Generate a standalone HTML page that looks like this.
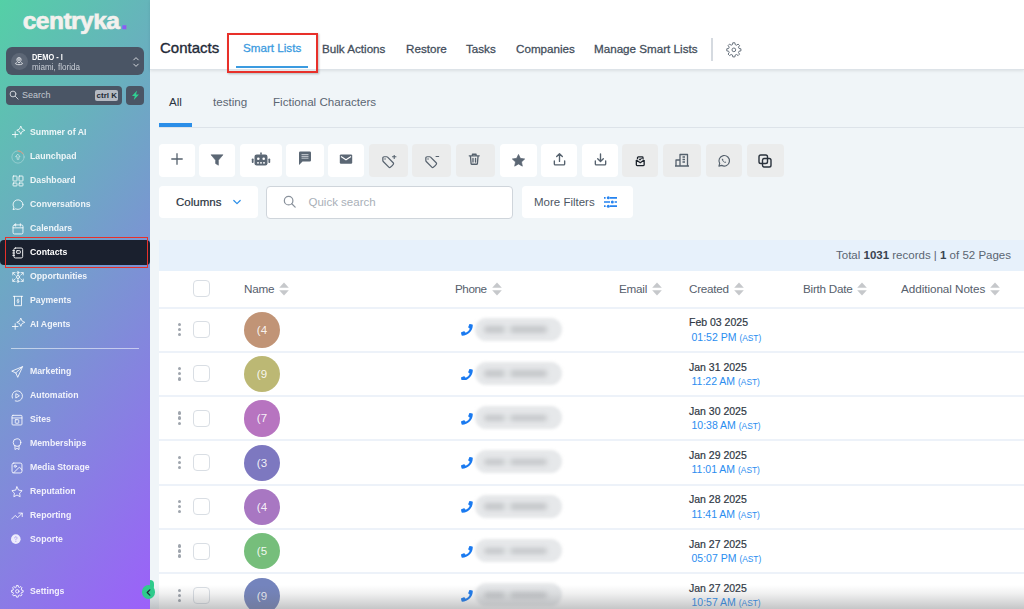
<!DOCTYPE html>
<html lang="en">
<head>
<meta charset="utf-8">
<title>Contacts</title>
<style>
*{box-sizing:border-box;margin:0;padding:0}
html,body{width:1024px;height:609px;overflow:hidden;background:#f0f5f8;font-family:"Liberation Sans",sans-serif;}
body{position:relative}
.abs{position:absolute}
/* ---------- sidebar ---------- */
#side{position:absolute;left:0;top:0;width:150px;height:609px;background:linear-gradient(128deg,#54d0a6 0%,#9c60fa 100%);}
#logo{position:absolute;left:0;top:6.5px;width:150px;text-align:center;color:#f3f1ee;font-weight:bold;font-size:24.5px;letter-spacing:-0.5px;line-height:28px;-webkit-text-stroke:.7px #f3f1ee;clip-path:inset(7px 0 0 0)}
#logo span{color:#8b5cf6;-webkit-text-stroke:.4px #8b5cf6;margin-left:1.5px}
#acct{position:absolute;left:5.600px;top:47.100px;width:138.700px;height:28.400px;border-radius:6px;background:#4a5565}
#acct .av{position:absolute;left:5px;top:5.500px;width:17px;height:17px;border-radius:50%;background:#5d6776}
#acct .t1{position:absolute;left:26px;top:4.900px;font-size:8.3px;font-weight:bold;color:#fff;line-height:10px;transform:scaleX(.89);transform-origin:0 0;white-space:nowrap}
#acct .t2{position:absolute;left:26px;top:14.900px;font-size:8.5px;color:#c9ced6;line-height:10px;transform:scaleX(.95);transform-origin:0 0;white-space:nowrap}
#srch{position:absolute;left:5.600px;top:85.900px;width:116px;height:18.900px;border-radius:4px;background:#4a5565}
#srch .ph{position:absolute;left:16.500px;top:3px;font-size:9px;color:#c3c8d0;line-height:12px}
#srch .kbd{position:absolute;left:89.600px;top:3.800px;width:23.200px;height:11.200px;border-radius:2px;background:#b5bac3;color:#222a35;font-size:8px;font-weight:bold;text-align:center;line-height:11px}
#bolt{position:absolute;left:126px;top:85.900px;width:18.300px;height:18.900px;border-radius:4px;background:#4a5565}
.nav{position:absolute;left:0;width:150px;height:24px}
.nav .lb{position:absolute;left:29.700px;top:6px;font-size:9.200px;font-weight:bold;color:rgba(255,255,255,.88);line-height:12px;white-space:nowrap;transform:scaleX(.95);transform-origin:0 0}
.nav svg{position:absolute;left:10.200px;top:5.900px;width:14px;height:14px;fill:none;stroke:rgba(255,255,255,.9);stroke-width:1.6;stroke-linecap:round;stroke-linejoin:round}
.nav.act{left:0;width:150px;background:#1a202e;border-radius:4px;height:25px}
.nav.act .lb{color:#fff;top:6.5px}
.nav.act svg{top:6px}
#sdiv{position:absolute;left:11px;top:347.600px;width:128px;height:1.200px;background:rgba(255,255,255,.550)}
/* ---------- header ---------- */
#head{position:absolute;left:150px;top:0;width:874px;height:69.500px;background:#fff;border-bottom:1px solid #dde3e8;box-shadow:0 1px 3px rgba(0,0,0,.09)}
#head .ttl{position:absolute;left:10px;top:38px;font-size:15px;color:#1f2a37;line-height:20px;-webkit-text-stroke:.350px #1f2a37}
.tab{position:absolute;top:41.200px;font-size:11.650px;color:#434e5b;line-height:16px;white-space:nowrap;-webkit-text-stroke:.280px currentColor}
/* ---------- body ---------- */
.stab{position:absolute;top:94.200px;font-size:11.600px;color:#5b6673;line-height:16px;white-space:nowrap}
.tb{position:absolute;top:144px;height:33px;background:#fff;border-radius:4px}
.tb.g{background:#ebecec}
.tb svg{position:absolute;left:50%;top:50%;width:16px;height:16px;margin:-8px 0 0 -8px}
/* ---------- table ---------- */
#card{position:absolute;left:159px;top:240px;width:870px;height:400px;background:#fff}
#band{position:absolute;left:0;top:0;width:100%;height:30.600px;background:#e7f1fb}
.th{position:absolute;top:41.200px;font-size:11.700px;letter-spacing:-.250px;color:#56606c;line-height:16px;white-space:nowrap}
.row{position:absolute;left:0;width:100%;height:44.300px;border-top:2px solid #edf2f9}
.cb{position:absolute;left:34.200px;width:17.200px;height:17px;border:1.500px solid #d9dee4;border-radius:4px;background:#fff}
.avt{position:absolute;left:84.900px;top:3.300px;width:36.200px;height:36.200px;border-radius:50%;color:rgba(255,255,255,.900);font-size:11.500px;line-height:36.200px;text-align:center}
.dots{position:absolute;left:18.900px;top:14.300px;width:3.300px;height:14px}
.dots i{display:block;width:3.300px;height:3.300px;border-radius:50%;background:#9fa5ad;margin-bottom:1.800px}
.d1{position:absolute;left:530px;top:6.800px;font-size:10.500px;color:#2f3844;-webkit-text-stroke:.200px #2f3844;line-height:14px;white-space:nowrap}
.d2{position:absolute;left:532.500px;top:21px;font-size:10.500px;color:#2a8df0;line-height:14px;white-space:nowrap}
.d2 small{font-size:8.400px}
.ph{position:absolute}
.blur{position:absolute;left:316px;top:9px;width:87px;height:23px;border-radius:11.500px;background:#e6e8ea;filter:blur(1.800px)}
.blur2{position:absolute;left:325px;top:17.600px;width:63px;height:6.500px;border-radius:3px;background:linear-gradient(90deg,#c4c6c9 0 32%,#e0e2e4 32% 43%,#c4c6c9 43% 100%);filter:blur(2.400px)}
</style>
</head>
<body>
<!-- SIDEBAR -->
<div id="side">
  <div id="logo">centryka<span>.</span></div>
  <div id="acct"><div class="av"><svg viewBox="0 0 17 17" style="position:absolute;left:2.500px;top:2.500px;width:12px;height:12px" fill="none" stroke="#e6e8ec" stroke-width="1.300"><circle cx="8.500" cy="6.500" r="1.300"/><path d="M8.500 11.300c-2-2-3-3.300-3-4.700a3 3 0 0 1 6 0c0 1.400-1 2.700-3 4.700z"/><path d="M5.800 10.800c-1.500.300-2.300.800-2.300 1.400 0 .900 2.200 1.500 5 1.500s5-.600 5-1.500c0-.600-.800-1.100-2.300-1.400"/></svg></div><svg viewBox="0 0 8 12" style="position:absolute;left:126px;top:8.500px;width:8px;height:12px" fill="none" stroke="#d3d6db" stroke-width="1" stroke-linecap="round" stroke-linejoin="round"><path d="M1.700 3.900L4 1.600l2.300 2.300M1.700 8.100L4 10.400l2.300-2.300"/></svg><div class="t1">DEMO - I</div><div class="t2">miami, florida</div></div>
  <div id="srch"><svg viewBox="0 0 10 10" style="position:absolute;left:3.500px;top:4.500px;width:10px;height:10px" fill="none" stroke="#ccd0d6" stroke-width="1" stroke-linecap="round"><circle cx="4" cy="4" r="2.900"/><path d="M6.300 6.300l2.800 2.800"/></svg><div class="ph">Search</div><div class="kbd">ctrl K</div></div>
  <div id="bolt"><svg viewBox="0 0 10 12" style="position:absolute;left:4.800px;top:4px;width:9px;height:10.500px"><path d="M6.800 0.500L1 6.800h3.200L3 11.500l6-6.500H5.600z" fill="#2fd092"/></svg></div>
  <div class="nav" style="top:120.2px"><svg viewBox="0 0 24 24" style="left:10.900px"><path d="M16.800 .500Q17.600 6.600 23.700 7.400Q17.600 8.200 16.800 14.300Q16 8.200 9.900 7.400Q16 6.600 16.800 .500z" stroke-width="1.500"/><path d="M7.200 9.800v9.600M2.400 14.600h9.600"/></svg><div class="lb">Summer of AI</div></div>
  <div class="nav" style="top:144.2px"><svg viewBox="0 0 24 24" style="left:10.900px"><circle cx="12" cy="12" r="10.500" stroke="rgba(255,255,255,.400)" stroke-width="1.300"/><path d="M12 7.500l3.500 4h-2v4.500h-3V11.500h-2z" stroke-width="1.200" stroke="rgba(255,255,255,.700)"/><path d="M12 1.500a10.500 10.500 0 0 1 9 5.200" stroke="#ee8a6a" stroke-width="1.400"/></svg><div class="lb">Launchpad</div></div>
  <div class="nav" style="top:168.3px"><svg viewBox="0 0 24 24" style="left:10.900px"><rect x="3.500" y="3.500" width="6.800" height="8.500" rx="1"/><rect x="13.700" y="3.500" width="6.800" height="8.500" rx="1"/><rect x="3.500" y="15.500" width="6.800" height="5" rx="1"/><rect x="13.700" y="15.500" width="6.800" height="5" rx="1"/></svg><div class="lb">Dashboard</div></div>
  <div class="nav" style="top:192.3px"><svg viewBox="0 0 24 24" style="left:10.900px"><path d="M20.5 11.5a8.5 8 0 0 1-12.4 7.1L3.5 20l1.5-4.3A8.5 8 0 1 1 20.5 11.5z"/></svg><div class="lb">Conversations</div></div>
  <div class="nav" style="top:216.3px"><svg viewBox="0 0 24 24" style="left:10.900px"><rect x="3.5" y="5" width="17" height="15.5" rx="2.5"/><path d="M3.5 10h17M8 3v4M16 3v4"/></svg><div class="lb">Calendars</div></div>
  <div class="nav act" style="top:239.700px"><svg viewBox="0 0 24 24" style="stroke:#fff;left:10.900px"><rect x="5" y="3.5" width="15" height="17" rx="2.5"/><path d="M3 8h3M3 12h3M3 16h3"/><rect x="9.5" y="8" width="6.5" height="4.5" rx="1"/></svg><div class="lb">Contacts</div></div>
  <div class="nav" style="top:264.4px"><svg viewBox="0 0 24 24" style="left:10.900px"><circle cx="12" cy="12" r="2.600"/><circle cx="12" cy="4.300" r="1.600"/><circle cx="12" cy="19.700" r="1.600"/><path d="M12 6v3.400M12 14.600V18M3 8.500V4.500h4M21 8.500V4.500h-4M3 15.500v4h4M21 15.500v4h-4M3.500 5l4 4M20.500 5l-4 4M3.500 19l4-4M20.500 19l-4-4" stroke-width="1.500"/></svg><div class="lb">Opportunities</div></div>
  <div class="nav" style="top:288.4px"><svg viewBox="0 0 24 24" style="left:10.900px"><path d="M4 4h16M6 4v16h12V4"/><path d="M12 8.5v7M13.8 10.2c-.6-.9-3.4-.9-3.4.6s3.400.9 3.400 2.400-2.800 1.500-3.600.5" stroke-width="1.2"/></svg><div class="lb">Payments</div></div>
  <div class="nav" style="top:312.4px"><svg viewBox="0 0 24 24" style="left:10.900px"><path d="M16.800 .500Q17.600 6.600 23.700 7.400Q17.600 8.200 16.800 14.300Q16 8.200 9.900 7.400Q16 6.600 16.800 .500z" stroke-width="1.500"/><path d="M7.200 9.800v9.600M2.400 14.600h9.600"/></svg><div class="lb">AI Agents</div></div>
  <div id="sdiv"></div>
  <div class="nav" style="top:358.8px"><svg viewBox="0 0 24 24"><path d="M21 3L3 10.500l7 3 3 7zM10 13.500L21 3"/></svg><div class="lb">Marketing</div></div>
  <div class="nav" style="top:382.8px"><svg viewBox="0 0 24 24"><path d="M4 15.500A9 9 0 1 1 9 20.500"/><path d="M10 8.500v7l5.500-3.500z"/></svg><div class="lb">Automation</div></div>
  <div class="nav" style="top:406.8px"><svg viewBox="0 0 24 24"><rect x="3.500" y="4" width="17" height="16.500" rx="1.500"/><path d="M3.500 8.500h17"/><rect x="9" y="11.500" width="6" height="6" rx="1"/></svg><div class="lb">Sites</div></div>
  <div class="nav" style="top:430.8px"><svg viewBox="0 0 24 24"><circle cx="12" cy="9.500" r="6.500"/><path d="M8.500 15v6.500l3.500-2 3.500 2V15"/></svg><div class="lb">Memberships</div></div>
  <div class="nav" style="top:454.8px"><svg viewBox="0 0 24 24"><rect x="3.500" y="3.500" width="17" height="17" rx="3"/><circle cx="9" cy="9" r="1.800"/><path d="M20.500 15l-4.500-4.500L6 20.500"/></svg><div class="lb">Media Storage</div></div>
  <div class="nav" style="top:478.8px"><svg viewBox="0 0 24 24"><path d="M12 3.200l2.700 5.600 6.100.9-4.400 4.300 1 6.100L12 17.200l-5.400 2.900 1-6.100-4.400-4.300 6.100-.9z"/></svg><div class="lb">Reputation</div></div>
  <div class="nav" style="top:502.8px"><svg viewBox="0 0 24 24"><path d="M3 17l6-6 4 4 8-8M15 7h6v6"/></svg><div class="lb">Reporting</div></div>
  <div class="nav" style="top:526.8px"><svg viewBox="0 0 24 24"><circle cx="10" cy="10.500" r="8.200" fill="rgba(255,255,255,.850)" stroke="none"/><path d="M8 8.500a2 2 0 1 1 3 1.700c-.700.400-1 .800-1 1.600M10 14.500v.100" stroke="#a99cf0" stroke-width="1.500"/></svg><div class="lb">Soporte</div></div>
  <div class="nav" style="top:579px"><svg viewBox="0 0 24 24" style="stroke-width:1.600;width:14.600px;height:14.600px;left:10.100px;top:5.400px"><path d="M10.17 4.93L10.57 2.41L13.43 2.41L13.83 4.93L15.71 5.71L17.77 4.20L19.80 6.23L18.29 8.29L19.07 10.17L21.59 10.57L21.59 13.43L19.07 13.83L18.29 15.71L19.80 17.77L17.77 19.80L15.71 18.29L13.83 19.07L13.43 21.59L10.57 21.59L10.17 19.07L8.29 18.29L6.23 19.80L4.20 17.77L5.71 15.71L4.93 13.83L2.41 13.43L2.41 10.57L4.93 10.17L5.71 8.29L4.20 6.23L6.23 4.20L8.29 5.71z"/><circle cx="12" cy="12" r="2.800"/></svg><div class="lb">Settings</div></div>
</div>
<!-- HEADER -->
<div id="head">
  <div class="ttl">Contacts</div>
  <div class="tab" style="left:93px;top:40.200px;color:#3b9be0">Smart Lists</div>
  <div style="position:absolute;left:86px;top:65.700px;width:72px;height:2px;background:#3b9be0"></div>
  <div class="tab" style="left:172px">Bulk Actions</div>
  <div class="tab" style="left:256px">Restore</div>
  <div class="tab" style="left:316px">Tasks</div>
  <div class="tab" style="left:366px">Companies</div>
  <div class="tab" style="left:444px">Manage Smart Lists</div>
  <div style="position:absolute;left:561px;top:37.800px;width:1.700px;height:23px;background:#d5dae0"></div>
  <svg style="position:absolute;left:575.300px;top:41.100px;width:17.700px;height:17.700px" viewBox="0 0 24 24" fill="none" stroke="#67717c" stroke-width="1.350" stroke-linejoin="round"><path d="M10.17 4.93L10.57 2.41L13.43 2.41L13.83 4.93L15.71 5.71L17.77 4.20L19.80 6.23L18.29 8.29L19.07 10.17L21.59 10.57L21.59 13.43L19.07 13.83L18.29 15.71L19.80 17.77L17.77 19.80L15.71 18.29L13.83 19.07L13.43 21.59L10.57 21.59L10.17 19.07L8.29 18.29L6.23 19.80L4.20 17.77L5.71 15.71L4.93 13.83L2.41 13.43L2.41 10.57L4.93 10.17L5.71 8.29L4.20 6.23L6.23 4.20L8.29 5.71z"/><circle cx="12" cy="12" r="2.500"/></svg>
</div>
<!-- red highlight boxes -->
<div style="position:absolute;left:227.400px;top:32.600px;width:90.800px;height:40.200px;border:2.500px solid #e8302a;box-shadow:1px 1px 2px rgba(0,0,0,.25)"></div>
<div style="position:absolute;left:4.800px;top:237.200px;width:143.200px;height:30.500px;border:1.800px solid #e8302a"></div>
<!-- SUB TABS -->
<div class="stab" style="left:169px;color:#2a3340">All</div>
<div class="stab" style="left:213px">testing</div>
<div class="stab" style="left:273px">Fictional Characters</div>
<div style="position:absolute;left:159px;top:126.500px;width:865px;height:1px;background:#dde3e9"></div>
<div style="position:absolute;left:159px;top:123px;width:33px;height:3.500px;background:#2b8ee8"></div>
<!-- TOOLBAR -->
<div id="tools">
  <div class="tb" style="left:159px;width:36px"><svg viewBox="0 0 16 16" style="margin-top:-9.300px"><path d="M8 2.300v11.400M2.300 8h11.400" stroke="#55616d" stroke-width="1.300" fill="none"/></svg></div>
  <div class="tb" style="left:199px;width:36px"><svg viewBox="0 0 16 16" style="margin-top:-8.600px"><path d="M2 2.800h12L9.400 8.200V13.200L6.600 11.600V8.200z" fill="#5b6774" stroke="#5b6774" stroke-width=".600" stroke-linejoin="round"/></svg></div>
  <div class="tb" style="left:240px;width:42.300px"><svg viewBox="0 0 20 16" style="width:20px;margin-left:-10px;margin-top:-8.600px"><path d="M9.200 0.500h1.600v2.300h-1.600z" fill="#5b6774"/><rect x="3.500" y="2.500" width="13" height="11" rx="2.200" fill="#5b6774"/><rect x="0.800" y="6.500" width="1.800" height="4.500" rx=".800" fill="#5b6774"/><rect x="17.400" y="6.500" width="1.800" height="4.500" rx=".800" fill="#5b6774"/><circle cx="7.300" cy="6.800" r="1.300" fill="#fff"/><circle cx="12.700" cy="6.800" r="1.300" fill="#fff"/><path d="M6 10.200h2v1.300H6zM9 10.200h2v1.300H9zM12 10.200h2v1.300h-2z" fill="#fff"/></svg></div>
  <div class="tb" style="left:286px;width:38px"><svg viewBox="0 0 16 16" style="margin-top:-10.500px"><path d="M2 2.800a1.300 1.300 0 0 1 1.300-1.300h9.400a1.300 1.300 0 0 1 1.300 1.300v7.400a1.300 1.300 0 0 1-1.300 1.300H5.500L2 15z" fill="#5b6774"/><path d="M4.500 4.600h7M4.500 6.400h7M4.500 8.200h7" stroke="#cfd4d9" stroke-width=".900"/></svg></div>
  <div class="tb" style="left:328px;width:36px"><svg viewBox="0 0 16 16" style="margin-top:-10px"><rect x="1.800" y="3.400" width="12.400" height="9.400" rx="1.200" fill="#5b6774"/><path d="M3 5.600l5 3.200 5-3.200" stroke="#fff" stroke-width="1.200" fill="none"/></svg></div>
  <div class="tb g" style="left:369px;width:39px"><svg viewBox="0 0 28 24" style="width:16.500px;height:14px;margin:-6px 0 0 -8px" fill="none" stroke="#55616d" stroke-width="2.100" stroke-linejoin="round" stroke-linecap="round"><path d="M9.568 3H5.250A2.250 2.250 0 0 0 3 5.250v4.318c0 .597.237 1.170.659 1.591l9.581 9.581c.699.699 1.780.872 2.607.330a18.095 18.095 0 0 0 5.223-5.223c.542-.827.369-1.908-.330-2.607L11.160 3.660A2.250 2.250 0 0 0 9.568 3z"/><path d="M6.800 6.800h.010" stroke-width="2.400"/><path d="M22.500 0v6M19.500 3h6" stroke-width="1.900"/></svg></div>
  <div class="tb g" style="left:412px;width:39px"><svg viewBox="0 0 28 24" style="width:16.500px;height:14px;margin:-6px 0 0 -8px" fill="none" stroke="#55616d" stroke-width="2.100" stroke-linejoin="round" stroke-linecap="round"><path d="M9.568 3H5.250A2.250 2.250 0 0 0 3 5.250v4.318c0 .597.237 1.170.659 1.591l9.581 9.581c.699.699 1.780.872 2.607.330a18.095 18.095 0 0 0 5.223-5.223c.542-.827.369-1.908-.330-2.607L11.160 3.660A2.250 2.250 0 0 0 9.568 3z"/><path d="M6.800 6.800h.010" stroke-width="2.400"/><path d="M20.500 2.500h4.500" stroke-width="1.900"/></svg></div>
  <div class="tb g" style="left:456px;width:39px"><svg viewBox="0 0 16 16" style="width:14.500px;height:14.500px;margin:-9px 0 0 -8.300px" fill="none" stroke="#55616d" stroke-width="1.450" stroke-linejoin="round" stroke-linecap="round"><path d="M2.500 4.200h11M6 4V2.500h4V4M3.800 4.500l.700 8.200a1 1 0 0 0 1 .800h5a1 1 0 0 0 1-.800l.700-8.200M6.600 7v4M9.400 7v4"/></svg></div>
  <div class="tb" style="left:500px;width:37px"><svg viewBox="0 0 16 16" style="width:15px;height:15px;margin:-7.900px 0 0 -7.800px"><path d="M8 1.500l2 4.200 4.600.600-3.400 3.200.900 4.500L8 11.700 3.900 14l.900-4.500L1.400 6.300 6 5.700z" fill="#5b6774" stroke="#5b6774" stroke-width=".700" stroke-linejoin="round"/></svg></div>
  <div class="tb" style="left:541px;width:36px"><svg viewBox="0 0 16 16" style="width:15px;height:15px;margin:-8.800px 0 0 -7.500px" fill="none" stroke="#55616d" stroke-width="1.450" stroke-linecap="round" stroke-linejoin="round"><path d="M8 10V2M5 4.800L8 1.800l3 3M2.500 9.500v3.200a1 1 0 0 0 1 1h9a1 1 0 0 0 1-1V9.500"/></svg></div>
  <div class="tb" style="left:582px;width:36px"><svg viewBox="0 0 16 16" style="width:15px;height:15px;margin:-8.800px 0 0 -7.500px" fill="none" stroke="#55616d" stroke-width="1.450" stroke-linecap="round" stroke-linejoin="round"><path d="M8 2v8M5 7.200l3 3 3-3M2.500 9.500v3.200a1 1 0 0 0 1 1h9a1 1 0 0 0 1-1V9.500"/></svg></div>
  <div class="tb g" style="left:622px;width:36px"><svg viewBox="0 0 16 16" style="width:12.500px;height:12.500px;margin:-5.800px 0 0 -6.400px" fill="none" stroke="#1c232c" stroke-width="1.700" stroke-linejoin="round"><path d="M3 6.500v6a1 1 0 0 0 1 1h8a1 1 0 0 0 1-1v-6M3 6.500l5 3.500 5-3.500M4.500 5.500V3.500a1 1 0 0 1 1-1h5a1 1 0 0 1 1 1v2"/><path d="M6.500 5l1.200 1.200 2-2.200" stroke-width="1.300"/></svg></div>
  <div class="tb g" style="left:663px;width:38px"><svg viewBox="0 0 16 16" style="margin-top:-8.300px" fill="none" stroke="#55616d" stroke-width="1.300" stroke-linejoin="round"><path d="M2 14V8h4v6M6 14V2.500h7.500V14zM1 14h14M8.500 5h2.500M8.500 7.500h2.500M8.500 10h2.500"/></svg></div>
  <div class="tb g" style="left:706px;width:36px"><svg viewBox="0 0 16 16" style="width:14px;height:14px;margin:-6.600px 0 0 -7.300px" fill="none" stroke="#55616d" stroke-width="1.350" stroke-linejoin="round"><path d="M2.200 13.800l.900-3A6 6 0 1 1 5.400 13z"/><path d="M5.800 5.200c-.400.300-.500 1 .100 2 .700 1.200 1.800 2.200 3 2.700.900.400 1.400.100 1.700-.400l-1.200-.900-.700.400c-.700-.400-1.300-1-1.700-1.700l.400-.700z" fill="#55616d" stroke="none"/></svg></div>
  <div class="tb g" style="left:747px;width:37px"><svg viewBox="0 0 16 16" style="margin:-7.900px 0 0 -8.800px" fill="none" stroke="#2a323c" stroke-width="1.400" stroke-linejoin="round"><rect x="2" y="2" width="8.500" height="8.500" rx="1.800"/><rect x="5.500" y="5.500" width="8.500" height="8.500" rx="1.800"/></svg></div>
  <!-- row 2 -->
  <div class="tb" style="left:159px;top:186px;width:99px;height:32px"><div style="position:absolute;left:17px;top:8px;font-size:11.500px;color:#2a3340;line-height:16px;-webkit-text-stroke:.200px #2a3340">Columns</div><svg viewBox="0 0 10 10" style="left:73px;top:11px;margin:0;width:10px;height:10px"><path d="M1.800 3.500L5 6.700l3.200-3.200" fill="none" stroke="#2b8ee8" stroke-width="1.200" stroke-linecap="round" stroke-linejoin="round"/></svg></div>
  <div style="position:absolute;left:266px;top:185.500px;width:247px;height:33px;background:#fff;border:1px solid #cfd5db;border-radius:4px"><svg viewBox="0 0 12 12" style="position:absolute;left:16px;top:8.600px;width:13.500px;height:13.500px"><circle cx="5" cy="5" r="3.800" fill="none" stroke="#8a929c" stroke-width="1.100"/><path d="M7.800 7.800l3 3" stroke="#8a929c" stroke-width="1.100" stroke-linecap="round"/></svg><div style="position:absolute;left:41.500px;top:7.200px;font-size:11.500px;color:#a9b0b8;line-height:16px">Quick search</div></div>
  <div class="tb" style="left:522px;top:186px;width:111px;height:32px"><div style="position:absolute;left:12px;top:8px;font-size:11.500px;color:#4d5764;line-height:16px;white-space:nowrap">More Filters</div><svg viewBox="0 0 13 12" style="left:81.700px;top:9.800px;margin:0;width:13px;height:12px"><path d="M0 1.800h1.600M6 1.800h7M0 6h6M10.600 6h2.400M0 10.200h1.600M6 10.200h7" stroke="#2583f0" stroke-width="1.700"/><circle cx="4.300" cy="1.800" r="1.500" fill="#2583f0"/><circle cx="8.300" cy="6" r="1.500" fill="#2583f0"/><circle cx="4.300" cy="10.200" r="1.500" fill="#2583f0"/></svg></div>
</div>
<!-- TABLE -->
<div id="card"><div id="band"><div style="position:absolute;right:18px;top:6.900px;font-size:11.500px;color:#5a6572;line-height:16px;white-space:nowrap">Total <b style="color:#3a4450">1031</b> records | <b style="color:#3a4450">1</b> of 52 Pages</div></div>
  <div class="cb" style="top:40px"></div>
  <div class="th" style="left:85px">Name<svg viewBox="0 0 10 14" style="display:inline-block;vertical-align:-3.200px;margin-left:5px;width:10px;height:14px"><path d="M5 .400L9.800 5.800H.200z" fill="#c6c8cb"/><path d="M5 13.600L9.800 8.200H.200z" fill="#c6c8cb"/></svg></div>
  <div class="th" style="left:296px;letter-spacing:-.450px">Phone<svg viewBox="0 0 10 14" style="display:inline-block;vertical-align:-3.200px;margin-left:5px;width:10px;height:14px"><path d="M5 .400L9.800 5.800H.200z" fill="#c6c8cb"/><path d="M5 13.600L9.800 8.200H.200z" fill="#c6c8cb"/></svg></div>
  <div class="th" style="left:460px">Email<svg viewBox="0 0 10 14" style="display:inline-block;vertical-align:-3.200px;margin-left:5px;width:10px;height:14px"><path d="M5 .400L9.800 5.800H.200z" fill="#c6c8cb"/><path d="M5 13.600L9.800 8.200H.200z" fill="#c6c8cb"/></svg></div>
  <div class="th" style="left:530px">Created<svg viewBox="0 0 10 14" style="display:inline-block;vertical-align:-3.200px;margin-left:5px;width:10px;height:14px"><path d="M5 .400L9.800 5.800H.200z" fill="#c6c8cb"/><path d="M5 13.600L9.800 8.200H.200z" fill="#c6c8cb"/></svg></div>
  <div class="th" style="left:644px">Birth Date<svg viewBox="0 0 10 14" style="display:inline-block;vertical-align:-3.200px;margin-left:5px;width:10px;height:14px"><path d="M5 .400L9.800 5.800H.200z" fill="#c6c8cb"/><path d="M5 13.600L9.800 8.200H.200z" fill="#c6c8cb"/></svg></div>
  <div class="th" style="left:742px;letter-spacing:-.050px">Additional Notes<svg viewBox="0 0 10 14" style="display:inline-block;vertical-align:-3.200px;margin-left:5px;width:10px;height:14px"><path d="M5 .400L9.800 5.800H.200z" fill="#c6c8cb"/><path d="M5 13.600L9.800 8.200H.200z" fill="#c6c8cb"/></svg></div>
  <div class="row" style="top:66.5px"><div class="dots"><i></i><i></i><i></i></div><div class="cb" style="top:12.700px"></div><div class="avt" style="background:#c19476">(4</div><svg class="ph" viewBox="0 0 512 512" style="left:301.800px;top:15.800px;width:11.800px;height:11.800px"><path d="M493.400 24.600l-104-24c-11.300-2.600-22.900 3.300-27.500 13.900l-48 112c-4.200 9.800-1.400 21.300 6.900 28l60.600 49.600c-36 76.700-98.900 140.500-177.200 177.200l-49.600-60.600c-6.800-8.300-18.200-11.100-28-6.900l-112 48C3.900 366.500-2 378.100.600 389.400l24 104C27.100 504.200 36.700 512 48 512c256.100 0 464-207.500 464-464 0-11.200-7.700-20.900-18.600-23.400z" fill="#1a7af0"/></svg><div class="blur"></div><div class="blur2"></div><div class="d1">Feb 03 2025</div><div class="d2">01:52 PM <small>(AST)</small></div></div>
  <div class="row" style="top:110.8px"><div class="dots"><i></i><i></i><i></i></div><div class="cb" style="top:12.700px"></div><div class="avt" style="background:#bcb874">(9</div><svg class="ph" viewBox="0 0 512 512" style="left:301.800px;top:15.800px;width:11.800px;height:11.800px"><path d="M493.400 24.600l-104-24c-11.300-2.600-22.900 3.300-27.500 13.900l-48 112c-4.200 9.800-1.400 21.300 6.900 28l60.600 49.600c-36 76.700-98.900 140.500-177.200 177.200l-49.600-60.600c-6.800-8.300-18.200-11.100-28-6.900l-112 48C3.900 366.500-2 378.100.600 389.400l24 104C27.100 504.200 36.700 512 48 512c256.100 0 464-207.500 464-464 0-11.200-7.700-20.900-18.600-23.400z" fill="#1a7af0"/></svg><div class="blur"></div><div class="blur2"></div><div class="d1">Jan 31 2025</div><div class="d2">11:22 AM <small>(AST)</small></div></div>
  <div class="row" style="top:155.1px"><div class="dots"><i></i><i></i><i></i></div><div class="cb" style="top:12.700px"></div><div class="avt" style="background:#b774c0">(7</div><svg class="ph" viewBox="0 0 512 512" style="left:301.800px;top:15.800px;width:11.800px;height:11.800px"><path d="M493.400 24.600l-104-24c-11.300-2.600-22.900 3.300-27.500 13.900l-48 112c-4.200 9.800-1.400 21.300 6.900 28l60.600 49.600c-36 76.700-98.900 140.500-177.200 177.200l-49.600-60.600c-6.800-8.300-18.200-11.100-28-6.900l-112 48C3.900 366.500-2 378.100.600 389.400l24 104C27.100 504.200 36.700 512 48 512c256.100 0 464-207.500 464-464 0-11.200-7.700-20.900-18.600-23.400z" fill="#1a7af0"/></svg><div class="blur"></div><div class="blur2"></div><div class="d1">Jan 30 2025</div><div class="d2">10:38 AM <small>(AST)</small></div></div>
  <div class="row" style="top:199.4px"><div class="dots"><i></i><i></i><i></i></div><div class="cb" style="top:12.700px"></div><div class="avt" style="background:#7d78c0">(3</div><svg class="ph" viewBox="0 0 512 512" style="left:301.800px;top:15.800px;width:11.800px;height:11.800px"><path d="M493.400 24.600l-104-24c-11.300-2.600-22.900 3.300-27.500 13.900l-48 112c-4.200 9.800-1.400 21.300 6.900 28l60.600 49.600c-36 76.700-98.900 140.500-177.200 177.200l-49.600-60.600c-6.800-8.300-18.200-11.100-28-6.900l-112 48C3.900 366.500-2 378.100.600 389.400l24 104C27.100 504.200 36.700 512 48 512c256.100 0 464-207.500 464-464 0-11.200-7.700-20.900-18.600-23.400z" fill="#1a7af0"/></svg><div class="blur"></div><div class="blur2"></div><div class="d1">Jan 29 2025</div><div class="d2">11:01 AM <small>(AST)</small></div></div>
  <div class="row" style="top:243.7px"><div class="dots"><i></i><i></i><i></i></div><div class="cb" style="top:12.700px"></div><div class="avt" style="background:#a877c2">(4</div><svg class="ph" viewBox="0 0 512 512" style="left:301.800px;top:15.800px;width:11.800px;height:11.800px"><path d="M493.400 24.600l-104-24c-11.300-2.600-22.900 3.300-27.500 13.900l-48 112c-4.200 9.800-1.400 21.300 6.900 28l60.600 49.600c-36 76.700-98.900 140.500-177.200 177.200l-49.600-60.600c-6.800-8.300-18.200-11.100-28-6.900l-112 48C3.900 366.500-2 378.100.600 389.400l24 104C27.100 504.200 36.700 512 48 512c256.100 0 464-207.500 464-464 0-11.200-7.700-20.900-18.600-23.400z" fill="#1a7af0"/></svg><div class="blur"></div><div class="blur2"></div><div class="d1">Jan 28 2025</div><div class="d2">11:41 AM <small>(AST)</small></div></div>
  <div class="row" style="top:288.0px"><div class="dots"><i></i><i></i><i></i></div><div class="cb" style="top:12.700px"></div><div class="avt" style="background:#76be7b">(5</div><svg class="ph" viewBox="0 0 512 512" style="left:301.800px;top:15.800px;width:11.800px;height:11.800px"><path d="M493.400 24.600l-104-24c-11.300-2.600-22.900 3.300-27.500 13.900l-48 112c-4.200 9.800-1.400 21.300 6.900 28l60.600 49.600c-36 76.700-98.900 140.500-177.200 177.200l-49.600-60.600c-6.800-8.300-18.200-11.100-28-6.900l-112 48C3.900 366.500-2 378.100.600 389.400l24 104C27.100 504.200 36.700 512 48 512c256.100 0 464-207.500 464-464 0-11.200-7.700-20.900-18.600-23.400z" fill="#1a7af0"/></svg><div class="blur"></div><div class="blur2"></div><div class="d1">Jan 27 2025</div><div class="d2">05:07 PM <small>(AST)</small></div></div>
  <div class="row" style="top:332.3px"><div class="dots"><i></i><i></i><i></i></div><div class="cb" style="top:12.700px"></div><div class="avt" style="background:#7484bd">(9</div><svg class="ph" viewBox="0 0 512 512" style="left:301.800px;top:15.800px;width:11.800px;height:11.800px"><path d="M493.400 24.600l-104-24c-11.300-2.600-22.900 3.300-27.500 13.900l-48 112c-4.200 9.800-1.400 21.300 6.900 28l60.600 49.600c-36 76.700-98.900 140.500-177.200 177.200l-49.600-60.600c-6.800-8.300-18.200-11.100-28-6.900l-112 48C3.900 366.500-2 378.100.600 389.400l24 104C27.100 504.200 36.700 512 48 512c256.100 0 464-207.500 464-464 0-11.200-7.700-20.900-18.600-23.400z" fill="#1a7af0"/></svg><div class="blur"></div><div class="blur2"></div><div class="d1">Jan 27 2025</div><div class="d2">10:57 AM <small>(AST)</small></div></div>
</div>
<div style="position:absolute;left:150px;top:585px;width:874px;height:24px;background:linear-gradient(to bottom,rgba(110,112,115,0),rgba(110,112,115,.100) 35%,rgba(110,112,115,.400))"></div>
<div style="position:absolute;left:149.500px;top:579.500px;width:4px;height:10px;border-radius:0 4px 4px 0;background:#2ecb8c"></div>
<div style="position:absolute;left:141.500px;top:585.400px;width:13.500px;height:13.500px;border-radius:50%;background:#2ecb8c"></div>
<svg style="position:absolute;left:144.500px;top:587.800px;width:7px;height:9px" viewBox="0 0 7 9"><path d="M4.800 1.800L2.200 4.500l2.600 2.700" fill="none" stroke="#1f2a37" stroke-width="1.200" stroke-linecap="round" stroke-linejoin="round"/></svg>
</body>
</html>
